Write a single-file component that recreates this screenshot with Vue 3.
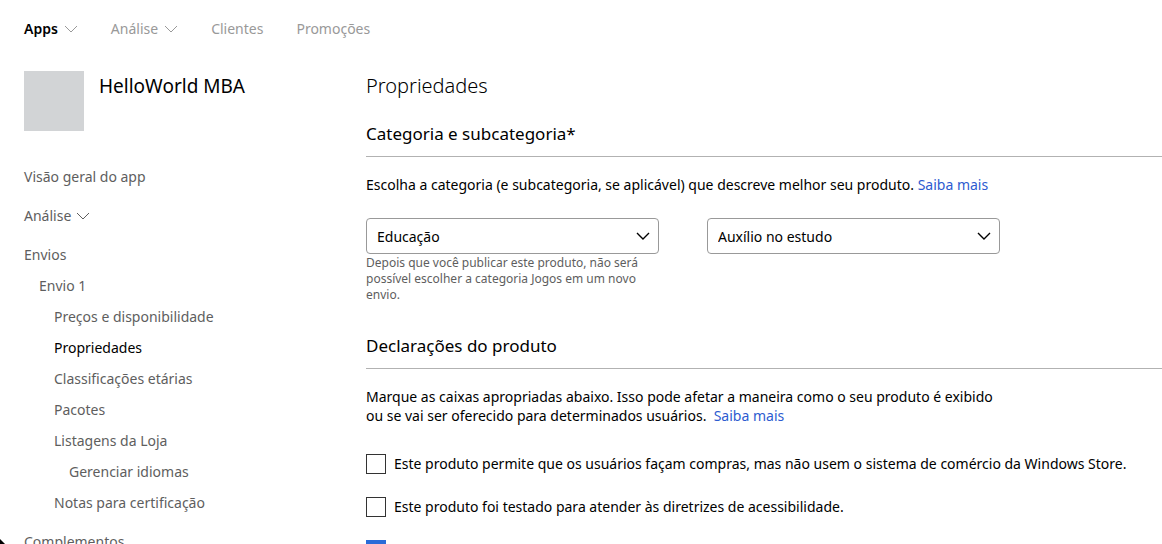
<script setup>
import { ref } from 'vue'

const topNav = [
  { label: 'Apps', menu: true, active: true },
  { label: 'Análise', menu: true },
  { label: 'Clientes' },
  { label: 'Promoções' },
]

const sideNav = [
  { label: 'Visão geral do app', level: 0 },
  { label: 'Análise', level: 0, menu: true },
  { label: 'Envios', level: 0 },
  { label: 'Envio 1', level: 1 },
  { label: 'Preços e disponibilidade', level: 2 },
  { label: 'Propriedades', level: 2, active: true },
  { label: 'Classificações etárias', level: 2 },
  { label: 'Pacotes', level: 2 },
  { label: 'Listagens da Loja', level: 2 },
  { label: 'Gerenciar idiomas', level: 3 },
  { label: 'Notas para certificação', level: 2 },
  { label: 'Complementos', level: 0 },
]

const category = ref('Educação')
const subcategory = ref('Auxílio no estudo')

const declarations = ref([
  { text: 'Este produto permite que os usuários façam compras, mas não usem o sistema de comércio da Windows Store.', checked: false },
  { text: 'Este produto foi testado para atender às diretrizes de acessibilidade.', checked: false },
  { text: 'Os clientes podem instalar este produto em unidades alternativas ou mídia removível.', checked: true },
])
</script>

<template>
  <div class="page">
    <nav class="top-nav" aria-label="Principal">
      <a v-for="item in topNav" :key="item.label" href="#" :class="{ active: item.active }">
        {{ item.label }}
        <svg v-if="item.menu" class="chevron" viewBox="0 0 14 8" aria-hidden="true"><path d="M1 1l6 6 6-6" /></svg>
      </a>
    </nav>

    <div class="layout">
      <aside class="sidebar">
        <div class="product">
          <div class="product-logo"></div>
          <div class="product-name">HelloWorld MBA</div>
        </div>
        <nav class="side-nav" aria-label="Produto">
          <a
            v-for="item in sideNav"
            :key="item.label"
            href="#"
            :class="['level-' + item.level, { active: item.active }]"
          >
            {{ item.label }}
            <svg v-if="item.menu" class="chevron" viewBox="0 0 14 8" aria-hidden="true"><path d="M1 1l6 6 6-6" /></svg>
          </a>
        </nav>
      </aside>

      <main class="content">
        <h1>Propriedades</h1>

        <section>
          <h2>Categoria e subcategoria*</h2>
          <p>Escolha a categoria (e subcategoria, se aplicável) que descreve melhor seu produto. <a href="#">Saiba mais</a></p>
          <div class="fields">
            <div class="field">
              <div class="select">
                <select v-model="category" aria-label="Categoria" aria-describedby="category-hint">
                  <option>Educação</option>
                </select>
                <svg class="chevron" viewBox="0 0 14 8" aria-hidden="true"><path d="M1 1l6 6 6-6" /></svg>
              </div>
              <div id="category-hint" class="hint">Depois que você publicar este produto, não será possível escolher a categoria Jogos em um novo envio.</div>
            </div>
            <div class="field">
              <div class="select">
                <select v-model="subcategory" aria-label="Subcategoria">
                  <option>Auxílio no estudo</option>
                </select>
                <svg class="chevron" viewBox="0 0 14 8" aria-hidden="true"><path d="M1 1l6 6 6-6" /></svg>
              </div>
            </div>
          </div>
        </section>

        <section>
          <h2>Declarações do produto</h2>
          <p>Marque as caixas apropriadas abaixo. Isso pode afetar a maneira como o seu produto é exibido ou se vai ser oferecido para determinados usuários. &nbsp;<a href="#">Saiba mais</a></p>
          <div class="checks">
            <label v-for="item in declarations" :key="item.text">
              <input v-model="item.checked" type="checkbox" />
              <span>{{ item.text }}</span>
            </label>
          </div>
        </section>
      </main>
    </div>

    <svg class="corner" viewBox="0 0 5 5" aria-hidden="true"><path d="M0 0l5 5H0z" /></svg>
  </div>
</template>

<style>
body {
  background: #fff;
  overflow: hidden;
}
</style>

<style scoped>
.page {
  position: relative;
  height: 100vh;
  overflow: hidden;
  box-sizing: border-box;
  padding: 18px 0 0 24px;
  font: 14px/19px "Noto Sans", "Open Sans", sans-serif;
  color: #000;
}
.corner {
  position: absolute;
  left: 0;
  bottom: 0;
  width: 5px;
  height: 5px;
}
a {
  color: #2d5bd0;
  text-decoration: none;
}
.chevron {
  flex: none;
  width: 14px;
  height: 8px;
  fill: none;
  stroke: currentColor;
  stroke-width: 1;
}
.top-nav {
  display: flex;
  gap: 33px;
  line-height: 22px;
}
.top-nav a {
  display: flex;
  align-items: center;
  gap: 6px;
  color: #999;
}
.top-nav .active {
  color: #000;
  font-weight: 600;
}
.top-nav .chevron {
  color: #999;
}
.layout {
  display: grid;
  grid-template-columns: 342px 1fr;
  padding-top: 31px;
}
.product {
  display: flex;
  gap: 15px;
}
.product-logo {
  width: 60px;
  height: 60px;
  background: #d2d4d6;
}
.product-name {
  font-size: 19px;
  line-height: 30px;
}
.side-nav {
  display: flex;
  flex-direction: column;
  gap: 11px;
  padding-top: 36px;
  line-height: 20px;
}
.side-nav a {
  display: flex;
  align-items: center;
  gap: 5px;
  color: #5e5e5e;
}
.side-nav .active {
  color: #000;
}
.side-nav .level-0 {
  margin-top: 8px;
  margin-left: 0;
}
.side-nav .level-0:first-child {
  margin-top: 0;
}
.side-nav .level-1 {
  margin-left: 15px;
}
.side-nav .level-2 {
  margin-left: 30px;
}
.side-nav .level-3 {
  margin-left: 45px;
}
h1 {
  margin: 0;
  font-size: 20px;
  font-weight: 300;
  line-height: 29px;
}
h2 {
  margin: 0;
  padding-bottom: 10px;
  border-bottom: 1px solid #b2b2b2;
  font-size: 17px;
  font-weight: 400;
  line-height: 24px;
}
section {
  padding-top: 22px;
}
section + section {
  padding-top: 31px;
}
p {
  max-width: 640px;
  margin: 18px 0 0;
}
.fields {
  display: flex;
  gap: 48px;
  padding-top: 24px;
}
.field {
  width: 293px;
}
.select {
  display: grid;
  align-items: center;
}
.select > * {
  grid-area: 1 / 1;
}
select {
  appearance: none;
  width: 100%;
  height: 36px;
  padding: 0 40px 0 10px;
  border: 1px solid #999;
  border-radius: 4px;
  background: #fff;
  color: #000;
  font: inherit;
}
.select .chevron {
  justify-self: end;
  margin-right: 9px;
  stroke-width: 1.4;
  pointer-events: none;
}
.hint {
  padding-top: 1px;
  color: #5e5e5e;
  font-size: 12px;
  line-height: 16px;
}
.checks {
  display: flex;
  flex-direction: column;
  gap: 23px;
  padding-top: 29px;
}
label {
  display: flex;
  align-items: center;
  gap: 8px;
  line-height: 20px;
  white-space: nowrap;
}
input {
  appearance: none;
  flex: none;
  box-sizing: border-box;
  width: 20px;
  height: 20px;
  margin: 0;
  border: 1px solid #333;
  background: #fff;
}
input:checked {
  border-color: #2a6bd8;
  background: #2a6bd8;
}
</style>
